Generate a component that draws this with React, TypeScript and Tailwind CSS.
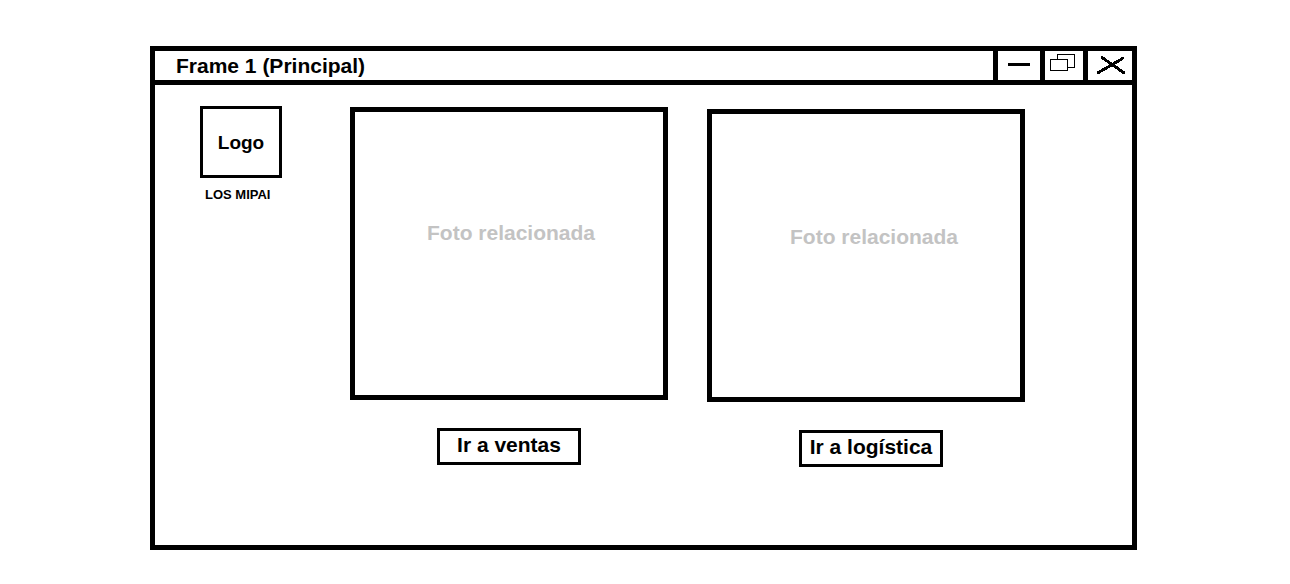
import React from "react";

type PanelProps = { action: string; className?: string; photoClass?: string; actionClass?: string };

function Panel({ action, className = "", photoClass = "", actionClass = "" }: PanelProps) {
  return (
    <section className={`flex min-w-0 flex-1 flex-col items-center ${className}`}>
      <div className={`flex h-[293px] w-full justify-center border-5 border-black text-[#c3c3c3] ${photoClass}`}>
        <p>Foto relacionada</p>
      </div>
      <div className={`mt-7 ${actionClass}`}>
        <button type="button" className="flex h-[37px] w-36 justify-center whitespace-nowrap border-3 border-black pt-0.5">
          {action}
        </button>
      </div>
    </section>
  );
}

export default function App() {
  return (
    <div className="min-h-screen bg-white pt-[46px] pr-[153px] pb-8 pl-[150px] font-['Liberation_Sans',Arial,sans-serif] text-[21px] leading-6 font-bold text-black">
      <main className="border-5 border-black">
        <header className="flex h-[34px] items-stretch border-b-5 border-black">
          <h1 className="flex-1 pt-[3px] pl-[21px]">Frame 1 (Principal)</h1>
          <button type="button" aria-label="Minimizar" className="w-[47px] border-l-5 border-black">
            <svg width="42" height="29" viewBox="0 0 42 29" shapeRendering="crispEdges">
              <path d="M10 13.5H32" stroke="black" strokeWidth="3" />
            </svg>
          </button>
          <button type="button" aria-label="Restaurar" className="w-[43px] border-l-5 border-black">
            <svg width="38" height="29" viewBox="0 0 38 29" fill="white" stroke="black" shapeRendering="crispEdges">
              <rect x="12.5" y="3.5" width="17" height="13" />
              <rect x="5.5" y="8.5" width="17" height="11" />
            </svg>
          </button>
          <button type="button" aria-label="Cerrar" className="w-[49px] border-l-5 border-black">
            <svg width="44" height="29" viewBox="0 0 44 29" fill="none" stroke="black" strokeWidth="3" strokeLinecap="round" shapeRendering="crispEdges">
              <path d="M14 6.5L35.5 21.5M34.5 7.5L10.5 21.5" />
            </svg>
          </button>
        </header>
        <div className="flex items-start pr-[107px] pb-[78px] pl-[45px]">
          <aside className="mt-[21px] mr-[68px] w-[82px] shrink-0">
            <div className="flex h-[72px] items-center justify-center border-3 border-black pt-0.5 text-[19px]">Logo</div>
            <p className="mt-[9px] pl-[5px] text-[13px] leading-4 whitespace-nowrap">LOS MIPAI</p>
          </aside>
          <div className="flex min-w-0 flex-1 gap-[39px]">
            <Panel action="Ir a ventas" className="pt-[22px]" photoClass="pt-[109px] pl-1" />
            <Panel action="Ir a logística" className="pt-6" photoClass="pt-[111px] pl-4" actionClass="pl-2.5" />
          </div>
        </div>
      </main>
    </div>
  );
}
